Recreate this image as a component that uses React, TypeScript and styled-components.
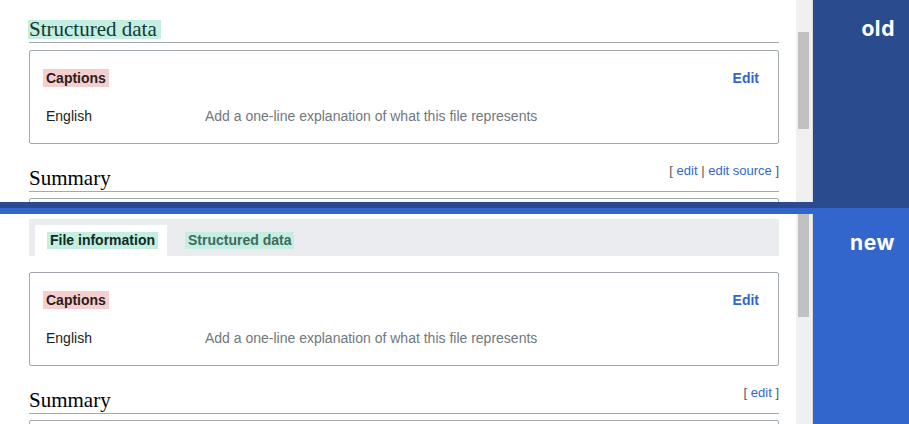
import React from "react";
import styled, { createGlobalStyle } from "styled-components";

const GlobalStyle = createGlobalStyle`
  html, body { margin: 0; padding: 0; background: #ffffff; }
  body { font-family: "Liberation Sans", Arial, sans-serif; color: #202122; overflow: hidden; }
`;

const Page = styled.div`
  width: 909px;
  height: 424px;
  display: flex;
  flex-direction: column;
  overflow: hidden;
`;

const Section = styled.section<{ $height: number; $band: string; $bandSide: "top" | "bottom" }>`
  display: grid;
  grid-template-columns: 813px 96px;
  height: ${(p) => p.$height}px;
  box-sizing: border-box;
  ${(p) => `border-${p.$bandSide}: 6px solid ${p.$band};`}
  flex: none;
`;

const Viewport = styled.div`
  display: flex;
  overflow: hidden;
  background: #ffffff;
`;

const Content = styled.div<{ $padTop: number }>`
  flex: 1;
  min-width: 0;
  padding: ${(p) => p.$padTop}px 17px 0 29px;
  overflow: hidden;
`;

const Scrollbar = styled.div`
  width: 17px;
  flex: none;
  background: #f0f0f0;
  border-right: 1px solid #dcdcdc;
  box-sizing: border-box;
  display: flex;
  flex-direction: column;
`;

const Thumb = styled.div<{ $top: number; $height: number }>`
  margin: ${(p) => p.$top}px 3px 0 2px;
  height: ${(p) => p.$height}px;
  background: #c1c1c1;
`;

const Label = styled.div<{ $bg: string }>`
  background: ${(p) => p.$bg};
  color: #ffffff;
  font-family: Inter, "Open Sans", sans-serif;
  font-weight: 700;
  font-size: 21px;
  letter-spacing: 0.6px;
  line-height: 24px;
  text-align: right;
  padding: 17px 14px 0 0;
`;

const HeadingRow = styled.div`
  display: flex;
  justify-content: space-between;
  align-items: flex-start;
  height: 28px;
  box-sizing: border-box;
  border-bottom: 1px solid #a2a9b1;
`;

const HeadingTitle = styled.h2<{ $highlight?: boolean }>`
  margin: 5px 0 0;
  display: inline-block;
  height: 19px;
  line-height: 19px;
  font-family: "Liberation Serif", "Times New Roman", serif;
  font-weight: 400;
  font-size: 21px;
  color: ${(p) => (p.$highlight ? "#123a30" : "#000000")};
  background: ${(p) => (p.$highlight ? "#c4eee1" : "transparent")};
  padding-right: ${(p) => (p.$highlight ? "4px" : "0")};
  margin-left: ${(p) => (p.$highlight ? "-1px" : "0")};
  padding-left: ${(p) => (p.$highlight ? "1px" : "0")};
`;

const EditLinks = styled.div`
  font-size: 13px;
  line-height: 13px;
  color: #54595d;
  white-space: pre;
`;

const Link = styled.a`
  color: #3366cc;
  text-decoration: none;
`;

const Box = styled.div<{ $gap: number }>`
  margin-top: ${(p) => p.$gap}px;
  border: 1px solid #a2a9b1;
  border-radius: 2px;
  padding: 18px 19px 18px 16px;
`;

const BoxHeader = styled.div`
  display: flex;
  justify-content: space-between;
  align-items: center;
  height: 18px;
`;

const Captions = styled.span`
  display: inline-block;
  margin-left: -3px;
  padding: 0 3px;
  height: 18px;
  line-height: 18px;
  font-size: 14px;
  font-weight: 700;
  color: #2e1b1b;
  background: #f4cfcf;
`;

const BoxEdit = styled.a`
  font-size: 14px;
  font-weight: 700;
  color: #3366cc;
  text-decoration: none;
`;

const CaptionRow = styled.div`
  display: grid;
  grid-template-columns: 159px 1fr;
  margin-top: 20px;
  font-size: 14px;
  line-height: 18px;
`;

const Language = styled.span`
  color: #202122;
`;

const Placeholder = styled.span`
  color: #72777d;
`;

const SummaryBlock = styled.div`
  margin-top: 20px;
`;

const TabBar = styled.div`
  display: flex;
  gap: 6px;
  height: 37px;
  box-sizing: border-box;
  padding: 6px 6px 0;
  background: #eaecf0;
`;

const Tab = styled.div<{ $active?: boolean }>`
  display: flex;
  align-items: center;
  padding: 0 9px 0 12px;
  background: ${(p) => (p.$active ? "#ffffff" : "transparent")};
`;

const TabLabel = styled.span<{ $active?: boolean }>`
  display: inline-block;
  padding: 0 3px;
  height: 17px;
  line-height: 17px;
  font-size: 14px;
  font-weight: 700;
  color: ${(p) => (p.$active ? "#102a24" : "#3f6a5f")};
  background: #c4eee1;
`;

const CaptionsBox: React.FC<{ gap: number }> = ({ gap }) => (
  <Box $gap={gap}>
    <BoxHeader>
      <Captions>Captions</Captions>
      <BoxEdit href="#">Edit</BoxEdit>
    </BoxHeader>
    <CaptionRow>
      <Language>English</Language>
      <Placeholder>Add a one-line explanation of what this file represents</Placeholder>
    </CaptionRow>
  </Box>
);

export default function App() {
  return (
    <>
      <GlobalStyle />
      <Page>
        <Section $height={208} $band="#2a4b8d" $bandSide="bottom">
          <Viewport>
            <Content $padTop={15}>
              <HeadingRow>
                <HeadingTitle $highlight>Structured data</HeadingTitle>
              </HeadingRow>
              <CaptionsBox gap={7} />
              <SummaryBlock>
                <HeadingRow>
                  <HeadingTitle>Summary</HeadingTitle>
                  <EditLinks>
                    [ <Link href="#">edit</Link> | <Link href="#">edit source</Link> ]
                  </EditLinks>
                </HeadingRow>
                <Box $gap={6} />
              </SummaryBlock>
            </Content>
            <Scrollbar>
              <Thumb $top={32} $height={97} />
            </Scrollbar>
          </Viewport>
          <Label $bg="#2a4b8d">old</Label>
        </Section>
        <Section $height={216} $band="#3366cc" $bandSide="top">
          <Viewport>
            <Content $padTop={5}>
              <TabBar>
                <Tab $active>
                  <TabLabel $active>File information</TabLabel>
                </Tab>
                <Tab>
                  <TabLabel>Structured data</TabLabel>
                </Tab>
              </TabBar>
              <CaptionsBox gap={16} />
              <SummaryBlock>
                <HeadingRow>
                  <HeadingTitle>Summary</HeadingTitle>
                  <EditLinks>
                    [ <Link href="#">edit</Link> ]
                  </EditLinks>
                </HeadingRow>
                <Box $gap={6} />
              </SummaryBlock>
            </Content>
            <Scrollbar>
              <Thumb $top={0} $height={103} />
            </Scrollbar>
          </Viewport>
          <Label $bg="#3366cc">new</Label>
        </Section>
      </Page>
    </>
  );
}
